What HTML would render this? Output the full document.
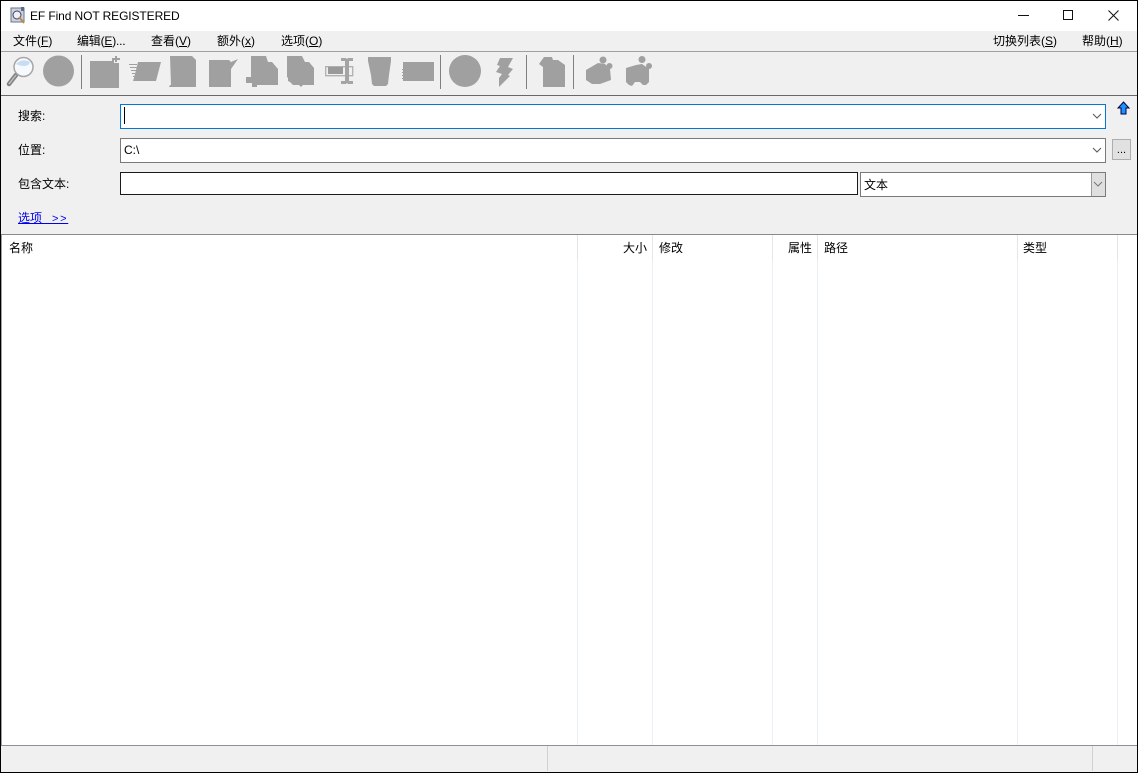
<!DOCTYPE html>
<html><head><meta charset="utf-8"><style>
html,body{margin:0;padding:0;width:1138px;height:773px;overflow:hidden;background:#f0f0f0}
body{position:relative;font-family:"Liberation Sans","Noto Sans CJK SC",sans-serif;font-size:12px;color:#000}
.a{position:absolute}
.t{position:absolute;white-space:nowrap;line-height:16px;font-size:12px}
u{text-decoration:underline}
.box{position:absolute;box-sizing:border-box;background:#fff}
.vl{position:absolute;top:235px;height:510px;width:1px;background:#eaf1f6}
.hs{position:absolute;top:235px;height:25px;width:1px;background:#e5e5e5}
</style></head><body>
<div class="a" style="left:1px;top:1px;width:1136px;height:30px;background:#fff"></div>
<svg class="a" style="left:9px;top:6px" width="18" height="18" viewBox="0 0 18 18"><rect x="2" y="2" width="13" height="14" fill="#c9d3e2" stroke="#6a7488"/><circle cx="8" cy="9" r="4" fill="#eef" stroke="#444"/><path d="M10 11l5 6" stroke="#b85" stroke-width="2"/><path d="M12 1h3v4h-3z" fill="#5a6a88"/></svg>
<div class="t" style="left:30px;top:8px;color:#000;letter-spacing:-0.1px">EF Find NOT REGISTERED</div>
<svg class="a" style="left:1010px;top:1px" width="127" height="30" viewBox="0 0 127 30" fill="none" stroke="#111" stroke-width="1"><path d="M8 14.5h11"/><rect x="53.5" y="9.5" width="9" height="9"/><path d="M98.5 9.5l10 10M108.5 9.5l-10 10"/></svg>

<div class="t" style="left:13px;top:33px">文件(<u>F</u>)</div>
<div class="t" style="left:77px;top:33px;letter-spacing:-0.2px">编辑(<u>E</u>)...</div>
<div class="t" style="left:151px;top:33px">查看(<u>V</u>)</div>
<div class="t" style="left:217px;top:33px">额外(<u>x</u>)</div>
<div class="t" style="left:281px;top:33px">选项(<u>O</u>)</div>
<div class="t" style="left:993px;top:33px">切换列表(<u>S</u>)</div>
<div class="t" style="left:1082px;top:33px">帮助(<u>H</u>)</div>

<div class="a" style="left:1px;top:51px;width:1136px;height:1px;background:#a0a0a0"></div>
<svg class="a" style="left:0;top:50px" width="680" height="46" viewBox="0 50 680 46" fill="#a0a0a0">
<path d="M16 75L9 84" stroke="#808080" stroke-width="4.5" stroke-linecap="round"/>
<path d="M16 75L9 84" stroke="#c4c4c4" stroke-width="1.4"/>
<circle cx="23.5" cy="67" r="9.5" fill="#f6f9fd" stroke="#a6a6a6" stroke-width="1.5"/>
<path d="M16 64q6-6 14-2q-1 4-6 4q-4 0-8-2z" fill="#c8dcf3"/>
<circle cx="58.5" cy="71" r="15.5"/>
<rect x="81" y="55" width="1" height="34" fill="#808080"/>
<path d="M90 61h22v-1h2v3h5v25h-29z"/>
<path d="M115 56h2v2h3v2h-3v2h-2v-2h-3v-2h3z"/>
<path d="M129 64h8v1h-8zM130 67h7v1h-7zM131 70h5v1h-5zM132 73h3v1h-3zM133 76h2v1h-2z"/>
<path d="M138 62h23l-5 19h-23l1-3z"/>
<path d="M170 56h22l4 4v27h-27l1-2h1z"/>
<path d="M209 60h20l2 2 7-3-7 10v18h-22z"/>
<path d="M251 56h15l2 6h4l6 7v16h-21v2h-5v-4h-6v-6h5z"/>
<path d="M287 56h15l3 6h4l5 6v17h-11l-2 2-2-2h-6l-3-3-2-1v-3l-1-1z"/>
<path d="M325.7 66.7h27v9h-27z" fill="none" stroke="#b0b0b0" stroke-width="1.3"/>
<rect x="328" y="67" width="15" height="7" fill="#999"/>
<path d="M341 58h5l1 1 1-1h5v3h-4v20h4v3h-5l-1-1-1 1h-5v-3h4v-20h-4z" fill="#a4a4a4"/>
<path d="M368 57h23v4l-2 14-1 9-2 2h-12l-2-2-1-9-3-14z"/>
<path d="M403 62h31v19h-31v-2h-1v-1h1v-2h-1v-1h1v-2h-1v-1h1v-2h-1v-1h1z"/>
<rect x="440" y="55" width="1" height="34" fill="#808080"/>
<circle cx="465" cy="71" r="16"/>
<path d="M500 58L513 58L508 67L513 69L508 75L510 76L499 87L499 78L502 74L496 72L500 66L497 65Z"/>
<rect x="526" y="55" width="1" height="34" fill="#808080"/>
<path d="M544 57h8l1 3h5l7 5v22h-22v-20l-4-3z"/>
<rect x="573" y="55" width="1" height="34" fill="#808080"/>
<path d="M586 70L598 63L605 64L610 69L611 80L600 84L592 84L586 80Z"/>
<circle cx="603" cy="60" r="3.5"/>
<circle cx="609.5" cy="66" r="3"/>
<path d="M626 68L636 65L642 64L649 69L649 82L646 85L643 85L640 82L635 82L632 86L629 85L626 82Z"/>
<circle cx="642" cy="59.5" r="3.5"/>
<circle cx="649" cy="66" r="3"/>
</svg>
<div class="a" style="left:1px;top:95px;width:1136px;height:1px;background:#696969"></div>

<div class="t" style="left:18px;top:108px">搜索:</div>
<div class="box" style="left:120px;top:104px;width:986px;height:25px;border:1px solid #0078d7"></div>
<div class="a" style="left:124px;top:107px;width:1px;height:17px;background:#000"></div>
<svg class="a" style="left:1092px;top:113px" width="10" height="7" viewBox="0 0 10 7" fill="none" stroke="#555"><path d="M1 1l4 4 4-4"/></svg>
<svg class="a" style="left:1117px;top:101px" width="13" height="14" viewBox="0 0 13 14"><path d="M6.5 1L12 7H9v6H4V7H1z" fill="#1e90ff" stroke="#000040"/></svg>

<div class="t" style="left:18px;top:142px">位置:</div>
<div class="box" style="left:120px;top:138px;width:986px;height:25px;border:1px solid #7a7a7a"></div>
<div class="t" style="left:124px;top:142px">C:\</div>
<svg class="a" style="left:1092px;top:147px" width="10" height="7" viewBox="0 0 10 7" fill="none" stroke="#555"><path d="M1 1l4 4 4-4"/></svg>
<div class="box" style="left:1112px;top:139px;width:19px;height:21px;background:#e1e1e1;border:1px solid #adadad;text-align:center;line-height:20px;font-size:11px">...</div>

<div class="t" style="left:18px;top:176px">包含文本:</div>
<div class="box" style="left:120px;top:172px;width:738px;height:23px;border:1px solid #1a1a1a"></div>
<div class="box" style="left:860px;top:172px;width:246px;height:25px;border:1px solid #7a7a7a"></div>
<div class="t" style="left:864px;top:177px">文本</div>
<div class="box" style="left:1091px;top:173px;width:14px;height:23px;background:#dfdfdf;border-left:1px solid #9a9a9a"></div>
<svg class="a" style="left:1093px;top:181px" width="10" height="7" viewBox="0 0 10 7" fill="none" stroke="#777"><path d="M1 1l4 4 4-4"/></svg>

<div class="t" style="left:18px;top:210px;color:#0000ee;text-decoration:underline;white-space:pre">选项   <span style="font-size:11px;letter-spacing:1.7px">&gt;&gt;</span></div>

<div class="a" style="left:1px;top:234px;width:1136px;height:1px;background:#8a8a8a"></div>
<div class="a" style="left:1px;top:235px;width:1px;height:510px;background:#a0a0a0"></div>
<div class="a" style="left:2px;top:235px;width:1135px;height:510px;background:#fff"></div>
<div class="vl" style="left:577px"></div><div class="vl" style="left:652px"></div><div class="vl" style="left:772px"></div><div class="vl" style="left:817px"></div><div class="vl" style="left:1017px"></div><div class="vl" style="left:1117px"></div>
<div class="hs" style="left:577px"></div><div class="hs" style="left:652px"></div><div class="hs" style="left:772px"></div><div class="hs" style="left:817px"></div><div class="hs" style="left:1017px"></div><div class="hs" style="left:1117px"></div>
<div class="t" style="left:9px;top:240px">名称</div>
<div class="t" style="left:623px;top:240px">大小</div>
<div class="t" style="left:659px;top:240px">修改</div>
<div class="t" style="left:788px;top:240px">属性</div>
<div class="t" style="left:824px;top:240px">路径</div>
<div class="t" style="left:1023px;top:240px">类型</div>

<div class="a" style="left:1px;top:745px;width:1136px;height:1px;background:#8f8f9a"></div>
<div class="a" style="left:547px;top:746px;width:1px;height:25px;background:#d0d0d0"></div>
<div class="a" style="left:1092px;top:746px;width:1px;height:25px;background:#d0d0d0"></div>

<div class="a" style="left:0;top:0;width:1138px;height:1px;background:#000"></div>
<div class="a" style="left:0;top:0;width:1px;height:773px;background:#000"></div>
<div class="a" style="left:1137px;top:0;width:1px;height:773px;background:#000"></div>
<div class="a" style="left:0;top:772px;width:1138px;height:1px;background:#000"></div>
</body></html>
